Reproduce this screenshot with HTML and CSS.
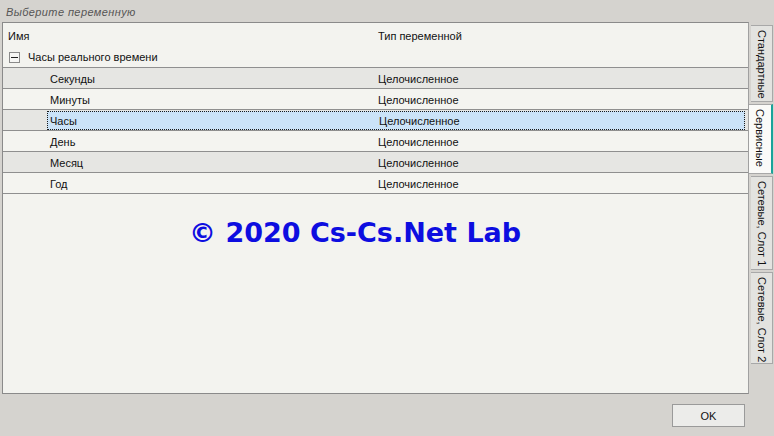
FILE: index.html
```html
<!DOCTYPE html>
<html>
<head>
<meta charset="utf-8">
<link rel="stylesheet" href="styles.css">
</head>
<body>
<div class="window">
  <div class="title">Выберите переменную</div>
  <div class="main">
    <div class="panel">
      <div class="header">
        <div class="c1">Имя</div>
        <div class="c2">Тип переменной</div>
      </div>
      <div class="group">
        <span class="expander"><span class="minus"></span></span>
        <span>Часы реального времени</span>
      </div>
      <div class="row alt"><div class="c1 child">Секунды</div><div class="c2">Целочисленное</div></div>
      <div class="row"><div class="c1 child">Минуты</div><div class="c2">Целочисленное</div></div>
      <div class="row alt sel"><div class="selbox"><div class="c1 child2">Часы</div><div class="c2 c2sel">Целочисленное</div></div></div>
      <div class="row"><div class="c1 child">День</div><div class="c2">Целочисленное</div></div>
      <div class="row alt"><div class="c1 child">Месяц</div><div class="c2">Целочисленное</div></div>
      <div class="row"><div class="c1 child">Год</div><div class="c2">Целочисленное</div></div>
      <div class="watermark">© 2020 Cs-Cs.Net Lab</div>
    </div>
    <div class="tabs">
      <div class="tab t1"><span>Стандартные</span></div>
      <div class="tab t2 active"><span>Сервисные</span></div>
      <div class="tab t3"><span>Сетевые, Слот 1</span></div>
      <div class="tab t4"><span>Сетевые, Слот 2</span></div>
    </div>
  </div>
  <div class="footer">
    <button class="ok">OK</button>
  </div>
</div>
</body>
</html>
```
FILE: styles.css
```css
* { box-sizing: border-box; }
html, body { margin: 0; padding: 0; }
body {
  width: 774px;
  height: 436px;
  background: #d5d3cf;
  font-family: "Liberation Sans", Arial, sans-serif;
  font-size: 11px;
  color: #111;
  overflow: hidden;
}
.window { width: 774px; height: 436px; display: flex; flex-direction: column; }
.title {
  height: 22px;
  padding: 6px 0 0 6px;
  font-style: italic;
  color: #555;
  font-size: 11px;
  letter-spacing: 0.4px;
}
.main { display: flex; height: 372px; padding-left: 2px; }
.panel {
  position: relative;
  width: 747px;
  height: 372px;
  background: #f3f3ef;
  border: 1px solid #8a8a8a;
  border-right-color: #a0a0a0;
}
.header { display: flex; height: 24px; align-items: center; padding-top: 1px; }
.c1 { width: 375px; padding-left: 5px; }
.c2 { flex: 1; }
.group {
  height: 21px;
  display: flex;
  align-items: center;
  padding-left: 6px;
  border-bottom: 1px solid #8f8f8f;
}
.expander {
  width: 11px; height: 11px;
  border: 1px solid #8a8a8a;
  background: #f6f6f4;
  margin-right: 8px;
  display: flex; align-items: center; justify-content: center;
}
.minus { width: 7px; height: 1px; background: #222; }
.row {
  display: flex;
  height: 21px;
  align-items: center;
  border-bottom: 1px solid #8f8f8f;
  background: #f4f4f0;
  padding-top: 1px;
}
.row.alt { background: #e6e6e3; }
.child { padding-left: 47px; }
.sel { background: #e9e9e6; padding-top: 0; }
.selbox {
  display: flex;
  align-items: center;
  height: 19px;
  margin-left: 44px;
  width: 698px;
  background: #cbe3f8;
  border: 1px dotted #1a1a1a;
  padding-top: 1px;
}
.child2 { width: 331px; padding-left: 2px; }
.watermark {
  position: absolute;
  left: 186px;
  top: 194px;
  font-family: "DejaVu Sans", Verdana, sans-serif;
  font-weight: bold;
  font-size: 27px;
  color: #0d0de0;
  white-space: nowrap;
}
.tabs {
  display: flex;
  flex-direction: column;
  padding-left: 2px;
  padding-top: 3px;
  width: 25px;
}
.tab {
  width: 22px;
  background: #e3e3e0;
  border: 1px solid #a8a8a8;
  border-left: none;
  display: flex;
  justify-content: center;
  padding-top: 4px;
  margin-bottom: 2px;
}
.tab span {
  writing-mode: vertical-rl;
  font-size: 11px;
  color: #111;
}
.t1 { height: 77px; }
.t2 { height: 70px; background: #fafaf8; border-right: 2px solid #1aa39a; margin-left: -2px; width: 24px; }
.t3 { height: 94px; }
.t4 { height: 92px; }
.footer { display: flex; justify-content: flex-end; padding: 10px 29px 0 0; }
.ok {
  width: 73px;
  height: 23px;
  font-family: "Liberation Sans", Arial, sans-serif;
  font-size: 11px;
  background: #ececea;
  border: 1px solid #9a9a9a;
  color: #111;
  padding: 0;
}
```
